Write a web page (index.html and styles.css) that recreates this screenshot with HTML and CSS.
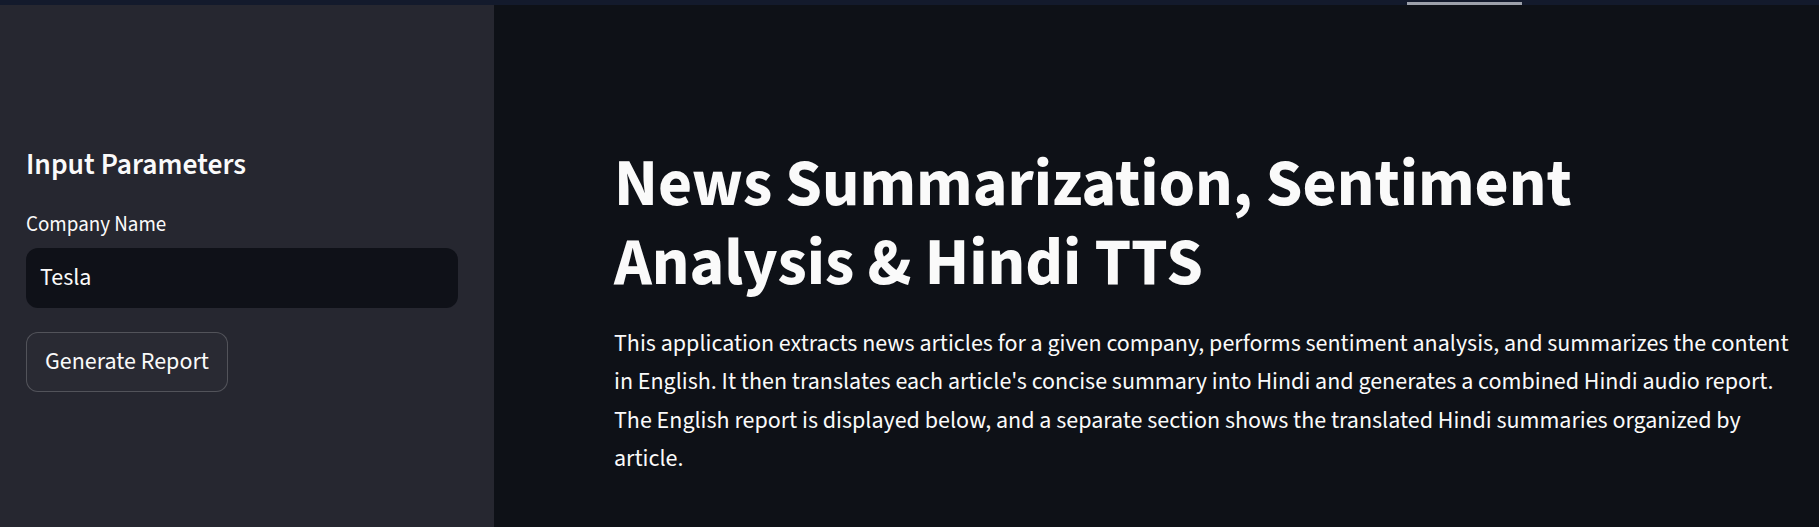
FILE: index.html
```html
<!DOCTYPE html>
<html lang="en">
<head>
<meta charset="utf-8">
<title>News Summarization, Sentiment Analysis &amp; Hindi TTS</title>
<link rel="stylesheet" href="styles.css">
</head>
<body>
<div class="topbar"><div class="topbar-thumb"></div></div>
<div class="app">
  <aside class="sidebar">
    <h2 class="sidebar-title">Input Parameters</h2>
    <label class="field-label" for="company">Company Name</label>
    <input class="text-input" id="company" type="text" value="Tesla">
    <button class="btn" type="button">Generate Report</button>
  </aside>
  <main class="main">
    <h1 class="page-title">News Summarization, Sentiment Analysis &amp; Hindi TTS</h1>
    <p class="intro">This application extracts news articles for a given company, performs sentiment analysis, and summarizes the content in English. It then translates each article's concise summary into Hindi and generates a combined Hindi audio report. The English report is displayed below, and a separate section shows the translated Hindi summaries organized by article.</p>
  </main>
</div>
</body>
</html>
```
FILE: styles.css
```css
* { box-sizing: border-box; }

html, body {
  margin: 0;
  height: 527px;
  overflow: hidden;
}

body {
  background: #0e1117;
  color: #fafafa;
  font-family: "Source Sans 3", Lato, "Noto Sans", sans-serif;
}

.topbar {
  position: relative;
  height: 5px;
  background: #131a2c;
}

.topbar-thumb {
  position: absolute;
  left: 1407px;
  top: 2px;
  width: 115px;
  height: 3px;
  background: #9ca0aa;
}

.app {
  display: flex;
  height: 522px;
}

.sidebar {
  width: 494px;
  flex: 0 0 494px;
  background: #262730;
  padding: 141.8px 36px 0 26px;
  display: flex;
  flex-direction: column;
  align-items: flex-start;
}

.sidebar-title {
  margin: 0;
  font-size: 29.6px;
  font-weight: 600;
  line-height: 36px;
}

.field-label {
  margin-top: 25.5px;
  font-size: 21px;
  line-height: 1.6;
  font-weight: 400;
}

.text-input {
  margin-top: 6px;
  width: 432px;
  height: 60px;
  border: none;
  border-radius: 12px;
  background: #0f1118;
  color: #fafafa;
  font-family: inherit;
  font-size: 24px;
  padding: 0 14px;
  outline: none;
}

.btn {
  margin-top: 24px;
  height: 60px;
  padding: 0 18px;
  border: 1px solid rgba(250, 250, 250, 0.2);
  border-radius: 12px;
  background: #292a33;
  color: #fafafa;
  font-family: inherit;
  font-size: 24px;
  line-height: 1;
}

.main {
  flex: 1;
  padding: 139.8px 20px 0 120px;
}

.page-title {
  margin: 0;
  font-size: 66px;
  font-weight: 700;
  line-height: 1.2;
}

.intro {
  margin: 21.8px 0 0;
  font-size: 24px;
  line-height: 1.6;
}
```
